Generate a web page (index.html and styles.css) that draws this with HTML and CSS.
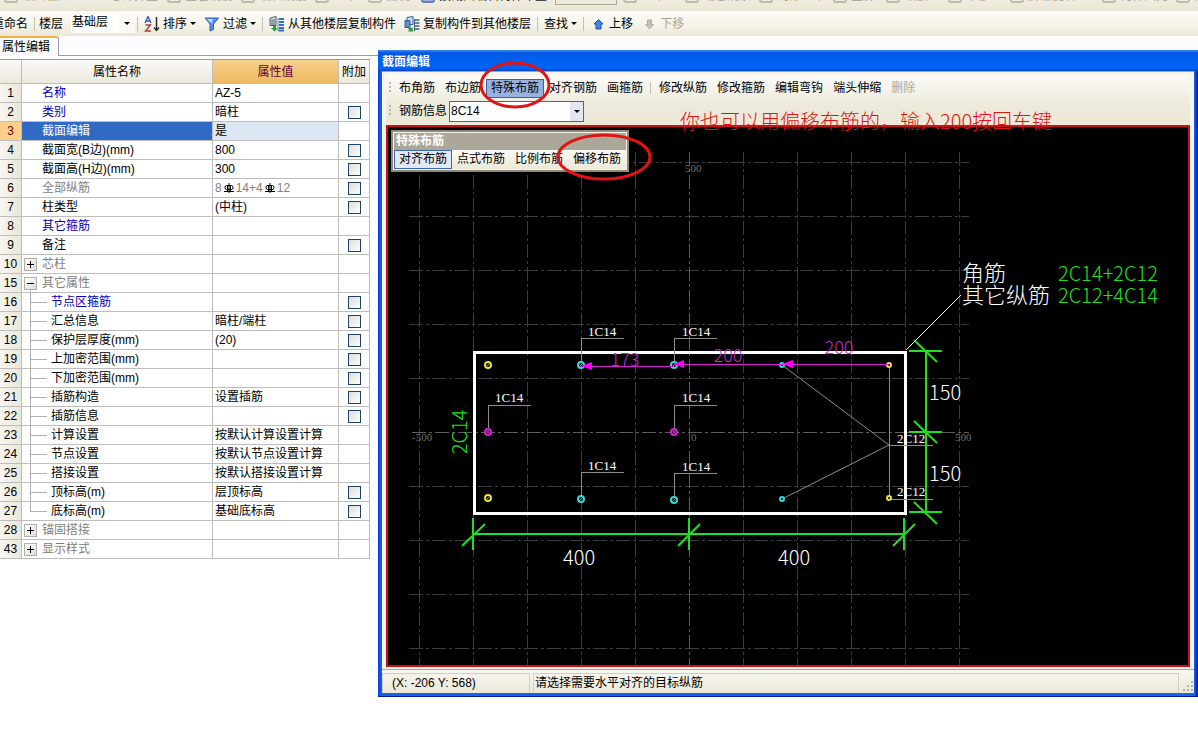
FILE: index.html
```html
<!DOCTYPE html>
<html lang="zh-CN">
<head>
    <meta charset="UTF-8">
    <title>截面编辑</title>
    <link rel="stylesheet" href="styles.css">
</head>
<body>
    <div class="topbar">
        <span class="t1"><i class="blob"></i>绘图输入</span>
        <span class="t2">汇总计算量</span>
        <span class="t3"><i class="blob"></i>查看钢筋</span>
        <span class="t3"><i class="blob"></i>编辑钢筋</span>
        <span class="t4"><i class="blob"></i>二维</span>
        <span class="t4"><i class="blob"></i>俯视</span>
        <span class="t5"><i class="blob blue"></i>按截面编辑构件布置</span>
        <span class="t6"></span>
        <span class="t7"><i class="blob"></i>三维</span>
        <span class="t3"><i class="blob"></i>动态观察</span>
        <span class="t3"><i class="blob"></i>局部三维</span>
        <span class="t4"><i class="blob"></i>全屏</span>
        <span class="t7"><i class="blob"></i>缩放</span>
        <span class="t7"><i class="blob"></i>平移</span>
        <span class="t8"><i class="blob"></i>屏幕旋转</span>
        <span class="t3"><i class="blob"></i>构件图元</span>
        <span class="t3"><i class="blob"></i>选择</span>
    </div>

    <div class="toolbar">
        <button class="btn">重命名</button>
        <span class="sep"></span>
        <label class="floor-label" for="floor">楼层</label>
        <span class="floor-select">
            <select id="floor"><option>基础层</option></select>
        </span>
        <span class="sep"></span>
        <button class="btn">
            <svg width="16" height="16" viewBox="0 0 16 16" fill="none">
                <path d="M1 7L4 0.5L7 7M2.2 5H5.8" stroke="#3b5fb0" stroke-width="1.4"/>
                <path d="M1.5 9H6.5L1.5 15H7" stroke="#a8432f" stroke-width="1.4"/>
                <path d="M12.500 1V14M10 11.500L12.500 14.500L15 11.500" stroke="#222" stroke-width="1.400"/>
            </svg>
            排序<i class="caret"></i>
        </button>
        <button class="btn">
            <svg width="16" height="16" viewBox="0 0 16 16">
                <path d="M1 2H14.500L9.500 8V13.500L6 15V8Z" fill="#5b93e4" stroke="#2c5fb8"/>
                <path d="M3 3H9L7.500 7.500Z" fill="#b8d6fa"/>
            </svg>
            过滤<i class="caret"></i>
        </button>
        <span class="sep"></span>
        <button class="btn">
            <svg width="16" height="16" viewBox="0 0 16 16">
                <path d="M1 2L7 0.500V9.500H1Z" fill="#dfe6ee" stroke="#4b586b"/>
                <path d="M2 4H6M2 6H6M2 8H6" stroke="#4b586b"/>
                <path d="M10 3H15M10 6H15M10 9H15M10 12H15M9.500 14.500H15" stroke="#2f6fc4" stroke-width="2"/>
                <path d="M9 2V15" stroke="#6f8fb8"/>
                <path d="M4 10V12H2L5.500 15.500L9 12H7V10Z" fill="#2f9c4a"/>
            </svg>
            从其他楼层复制构件
        </button>
        <button class="btn">
            <svg width="16" height="16" viewBox="0 0 16 16">
                <path d="M3 1.500L9 0.500V8.500H3Z" fill="#cfe0f5" stroke="#2c5f9e"/>
                <path d="M1 4.500H6V11.500H1Z" fill="#5d8fd0" stroke="#2c5f9e"/>
                <path d="M11 4H15.500M11 7H15.500M11 10H15.500M11 13H15.500" stroke="#4c6078" stroke-width="1.500"/>
                <path d="M10.500 3V15" stroke="#4c6078"/>
                <path d="M3 10L8 12V10.500L9.500 15.500H4L5 14Z" fill="#2f9c4a"/>
            </svg>
            复制构件到其他楼层
        </button>
        <span class="sep"></span>
        <button class="btn">查找<i class="caret"></i></button>
        <span class="sep"></span>
        <button class="btn">
            <svg width="16" height="16" viewBox="0 0 16 16">
                <path d="M8.500 3.500L13 8H11V13H6V8H4Z" fill="#3f86ea" stroke="#1d4fae"/>
            </svg>
            上移
        </button>
        <button class="btn" disabled>
            <svg width="16" height="16" viewBox="0 0 16 16">
                <path d="M8.500 13L12.500 8.500H10.500V4H6.500V8.500H4.500Z" fill="#c4c2b8" stroke="#aeaca2"/>
            </svg>
            下移
        </button>
    </div>

    <div class="workspace">
        <div class="panel">
            <div class="tabs"><button class="tab">属性编辑</button></div>
            <table class="props">
                <colgroup><col class="c-num"><col class="c-name"><col class="c-value"><col class="c-check"></colgroup>
                <thead>
                    <tr><th></th><th>属性名称</th><th class="active">属性值</th><th>附加</th></tr>
                </thead>
                <tbody>
                    <tr><th>1</th><td class="blue">名称</td><td>AZ-5</td><td></td></tr>
                    <tr><th>2</th><td class="blue">类别</td><td>暗柱</td><td><input type="checkbox" aria-label="类别附加"></td></tr>
                    <tr class="selected"><th>3</th><td>截面编辑</td><td>是</td><td></td></tr>
                    <tr><th>4</th><td>截面宽(B边)(mm)</td><td>800</td><td><input type="checkbox" aria-label="截面宽附加"></td></tr>
                    <tr><th>5</th><td>截面高(H边)(mm)</td><td>300</td><td><input type="checkbox" aria-label="截面高附加"></td></tr>
                    <tr><th>6</th><td class="gray">全部纵筋</td><td class="gray">8<svg class="rebar" width="10" height="10" viewBox="0 0 10 10"><path d="M5 0V10M0 8.500H10M2.500 2.500H7.500Q9 2.500 9 4.500T7.500 6.500H2.500Q1 6.500 1 4.500T2.500 2.500M3.500 2.500V8.500M6.500 2.500V8.500" fill="none" stroke="#000"/></svg>14+4<svg class="rebar" width="10" height="10" viewBox="0 0 10 10"><path d="M5 0V10M0 8.500H10M2.500 2.500H7.500Q9 2.500 9 4.500T7.500 6.500H2.500Q1 6.500 1 4.500T2.500 2.500M3.500 2.500V8.500M6.500 2.500V8.500" fill="none" stroke="#000"/></svg>12</td><td><input type="checkbox" aria-label="全部纵筋附加"></td></tr>
                    <tr><th>7</th><td>柱类型</td><td>(中柱)</td><td><input type="checkbox" aria-label="柱类型附加"></td></tr>
                    <tr><th>8</th><td class="blue">其它箍筋</td><td></td><td></td></tr>
                    <tr><th>9</th><td>备注</td><td></td><td><input type="checkbox" aria-label="备注附加"></td></tr>
                    <tr class="group"><th>10</th><td><button class="expander" aria-label="展开芯柱"></button>芯柱</td><td></td><td></td></tr>
                    <tr class="group open"><th>15</th><td><button class="expander" aria-label="收起其它属性"></button>其它属性</td><td></td><td></td></tr>
                    <tr class="child"><th>16</th><td class="blue">节点区箍筋</td><td></td><td><input type="checkbox" aria-label="节点区箍筋附加"></td></tr>
                    <tr class="child"><th>17</th><td>汇总信息</td><td>暗柱/端柱</td><td><input type="checkbox" aria-label="汇总信息附加"></td></tr>
                    <tr class="child"><th>18</th><td>保护层厚度(mm)</td><td>(20)</td><td><input type="checkbox" aria-label="保护层厚度附加"></td></tr>
                    <tr class="child"><th>19</th><td>上加密范围(mm)</td><td></td><td><input type="checkbox" aria-label="上加密范围附加"></td></tr>
                    <tr class="child"><th>20</th><td>下加密范围(mm)</td><td></td><td><input type="checkbox" aria-label="下加密范围附加"></td></tr>
                    <tr class="child"><th>21</th><td>插筋构造</td><td>设置插筋</td><td><input type="checkbox" aria-label="插筋构造附加"></td></tr>
                    <tr class="child"><th>22</th><td>插筋信息</td><td></td><td><input type="checkbox" aria-label="插筋信息附加"></td></tr>
                    <tr class="child"><th>23</th><td>计算设置</td><td>按默认计算设置计算</td><td></td></tr>
                    <tr class="child"><th>24</th><td>节点设置</td><td>按默认节点设置计算</td><td></td></tr>
                    <tr class="child"><th>25</th><td>搭接设置</td><td>按默认搭接设置计算</td><td></td></tr>
                    <tr class="child"><th>26</th><td>顶标高(m)</td><td>层顶标高</td><td><input type="checkbox" aria-label="顶标高附加"></td></tr>
                    <tr class="child last"><th>27</th><td>底标高(m)</td><td>基础底标高</td><td><input type="checkbox" aria-label="底标高附加"></td></tr>
                    <tr class="group"><th>28</th><td><button class="expander" aria-label="展开锚固搭接"></button>锚固搭接</td><td></td><td></td></tr>
                    <tr class="group"><th>43</th><td><button class="expander" aria-label="展开显示样式"></button>显示样式</td><td></td><td></td></tr>
                </tbody>
            </table>
        </div>

        <div class="dialog">
            <div class="title">截面编辑</div>
            <div class="body">
                <div class="tools">
                    <div class="tool-row">
                        <i class="grip"></i>
                        <button class="tool">布角筋</button>
                        <button class="tool">布边筋</button>
                        <button class="tool pressed">特殊布筋</button>
                        <button class="tool">对齐钢筋</button>
                        <button class="tool">画箍筋</button>
                        <span class="tool-sep"></span>
                        <button class="tool">修改纵筋</button>
                        <button class="tool">修改箍筋</button>
                        <button class="tool">编辑弯钩</button>
                        <button class="tool">端头伸缩</button>
                        <button class="tool" disabled>删除</button>
                    </div>
                    <div class="tool-row">
                        <i class="grip"></i>
                        <label class="info-label" for="info">钢筋信息</label>
                        <span class="combo"><select id="info"><option>8C14</option></select></span>
                    </div>
                </div>

                <div class="canvas">
                    <svg class="drawing" width="100%" height="538">
                        <g transform="translate(301 305)">
                            <!-- grid -->
                            <path class="grid" d="M-280 -270H280M-280 -216H280M-280 -162H280M-280 -108H280M-280 -54H280M-280 54H280M-280 108H280M-280 162H280M-280 216H280"/>
                            <path class="grid" d="M-270 -280V280M-216 -280V280M-162 -280V280M-108 -280V280M-54 -280V280M54 -280V280M108 -280V280M162 -280V280M216 -280V280M270 -280V280"/>
                            <path class="grid axis" d="M-277 0H280M0 -280V280"/>
                            <g class="scale">
                                <text x="-4" y="-260">500</text>
                                <text x="-277" y="9">-500</text>
                                <text x="2" y="9">0</text>
                                <text x="266" y="9">500</text>
                            </g>

                            <!-- column outline -->
                            <rect class="outline" x="-215" y="-80" width="431" height="161"/>

                            <!-- dimensions -->
                            <path class="dim" d="M-216 102H215M-216 86V118M0 86V118M215 86V118M237 -81V80M220 -81H253M220 0H253M220 80H253"/>
                            <path class="dim slash" d="M-227 114L-204 92M-11 114L11 92M204 114L226 92M225 -92L248 -70M225 -11L248 11M225 70L248 92"/>
                            <g class="big">
                                <text x="-126" y="133">400</text>
                                <text x="89" y="133">400</text>
                                <text x="240" y="-32">150</text>
                                <text x="240" y="49">150</text>
                                <text class="note" x="273" y="-151">角筋</text>
                                <text class="note" x="273" y="-129">其它纵筋</text>
                                <text class="green" x="369" y="-151">2C14+2C12</text>
                                <text class="green" x="369" y="-129">2C12+4C14</text>
                                <text class="green" text-anchor="middle" transform="translate(-222 0) rotate(-90)">2C14</text>
                            </g>
                            <path class="pointer" d="M217 -82L272 -137"/>

                            <!-- leaders -->
                            <path class="leader" d="M-108 -67V-94H-65M-15 -67V-94H28M-201 0V-27H-158M-15 0V-27H28M-108 67V40H-65M-15 68V41H28M200 -67V67H244M200 13H244"/>
                            <path class="leader fan" d="M93 -67L200 13L93 67"/>
                            <g class="bar-label">
                                <text x="-101" y="-96">1C14</text>
                                <text x="-7" y="-96">1C14</text>
                                <text x="-194" y="-30">1C14</text>
                                <text x="-7" y="-30">1C14</text>
                                <text x="-101" y="38">1C14</text>
                                <text x="-7" y="39">1C14</text>
                                <text x="208" y="11">2C12</text>
                                <text x="208" y="64">2C12</text>
                            </g>

                            <!-- bars -->
                            <g class="bars yellow">
                                <circle cx="-201" cy="-67" r="3"/><circle cx="-201" cy="66" r="3"/>
                                <circle cx="200" cy="-67" r="2"/><circle cx="200" cy="66" r="2"/>
                            </g>
                            <g class="bars cyan">
                                <circle cx="-108" cy="-67" r="3"/><circle cx="-15" cy="-67" r="3"/><circle cx="93" cy="-67" r="2"/>
                                <circle cx="-108" cy="67" r="3"/><circle cx="-15" cy="68" r="3"/><circle cx="93" cy="67" r="2"/>
                            </g>
                            <g class="bars purple">
                                <circle cx="-201" cy="0" r="3"/><circle cx="-15" cy="0" r="3"/>
                            </g>
                            <!-- hatch inside the 14 mm bars -->
                            <path class="hatch" d="M-203 -65L-199 -69M-203 68L-199 64M-110 -65L-106 -69M-17 -65L-13 -69M-110 69L-106 65M-17 70L-13 66"/>
                            <path class="hatch purple" d="M-203 2L-199 -2M-203 -2L-199 2M-17 2L-13 -2M-17 -2L-13 2"/>

                            <!-- offsets -->
                            <path class="offset" d="M-108 -66H-15M-15 -68H200"/>
                            <path class="arrow" d="M-108 -66L-97 -70V-62ZM-15 -68L-5 -72V-64ZM93 -68L104 -72V-64Z"/>
                            <g class="offset-label">
                                <text x="-64" y="-66">173</text>
                                <text x="39" y="-70">200</text>
                                <text x="150" y="-78">200</text>
                            </g>
                        </g>
                    </svg>

                    <div class="popup">
                        <div class="popup-title">特殊布筋</div>
                        <div class="popup-row">
                            <button class="tool current">对齐布筋</button>
                            <button class="tool">点式布筋</button>
                            <button class="tool">比例布筋</button>
                            <button class="tool">偏移布筋</button>
                        </div>
                    </div>
                </div>
            </div>
            <div class="status">
                <span class="pane coords">(X: -206 Y: 568)</span>
                <span class="pane hint">请选择需要水平对齐的目标纵筋</span>
                <svg class="resize" width="12" height="12" viewBox="0 0 12 12">
                    <path d="M9 1H11V3H9ZM5 5H7V7H5ZM9 5H11V7H9ZM1 9H3V11H1ZM5 9H7V11H5ZM9 9H11V11H9Z" fill="#b8b4a2"/>
                </svg>
            </div>

            <svg class="marks" width="100%" height="100%">
                <ellipse cx="137" cy="35" rx="34" ry="22"/>
                <ellipse cx="226" cy="107" rx="46" ry="22"/>
                <text x="302" y="79">你也可以用偏移布筋的，输入200按回车键</text>
            </svg>
        </div>
    </div>
</body>
</html>
```
FILE: styles.css
```css
* {
    box-sizing: border-box;
}
body {
    margin: 0;
    overflow: hidden;
    background: #fff;
    color: #000;
    font-family: "Liberation Sans", "Noto Sans CJK SC", sans-serif;
    font-size: 12px;
    line-height: 18px;
}
button, select {
    font: inherit;
    color: inherit;
    margin: 0;
    border: 0;
    background: none;
    white-space: nowrap;
}
select {
    appearance: none;
    width: 100%;
    outline: none;
}

/* lower edge of the main toolbar */
.topbar {
    display: flex;
    align-items: flex-end;
    height: 11px;
    padding-bottom: 5px;
    padding-left: 4px;
    overflow: hidden;
    background: linear-gradient(#f0ede0, #ebe7d7);
    border-bottom: 1px solid #e4e0cf;
    color: #a5a294;
    white-space: nowrap;
}
.topbar span {
    display: flex;
    align-items: center;
    flex: none;
    height: 18px;
}
.blob {
    width: 14px;
    height: 14px;
    margin-right: 4px;
    border: 2px solid #bdbaae;
    border-radius: 3px;
}
.blob.blue {
    border-color: #6a80b4;
    background: #9db0d8;
}
.topbar .t1 { width: 94px; }
.topbar .t2 { width: 69px; }
.topbar .t3 { width: 74px; }
.topbar .t4 { width: 53px; }
.topbar .t5 { width: 134px; color: #222; }
.topbar .t6 { width: 62px; margin-right: 6px; border: 1px solid #aca899; }
.topbar .t7 { width: 62px; }
.topbar .t8 { width: 92px; }

.toolbar {
    display: flex;
    align-items: center;
    height: 25px;
    margin-left: -12px;
    background: linear-gradient(#fdfcf9, #f5f2e8 60%, #ebe7d7);
    white-space: nowrap;
}
.btn {
    display: flex;
    align-items: center;
    flex: none;
    gap: 3px;
    height: 22px;
    padding: 0 4px;
}
.btn:disabled, .tool:disabled {
    color: #aca899;
}
.caret {
    border: 3px solid transparent;
    border-top-color: #000;
    border-bottom: 0;
}
.sep {
    flex: none;
    width: 1px;
    height: 14px;
    margin: 0 2px;
    background: #c5c2b2;
}
.floor-label {
    margin: 0 8px 0 2px;
}
.floor-select {
    display: flex;
    align-items: center;
    flex: none;
    width: 64px;
    height: 19px;
    padding-right: 5px;
    background: linear-gradient(to right, #fff 48px, #faf9f4 48px);
}
.floor-select select {
    padding: 0 0 3px 1px;
}
.floor-select::after, .combo::after {
    content: "";
    border: 3px solid transparent;
    border-top-color: #000;
    border-bottom: 0;
}

.workspace {
    display: flex;
    align-items: flex-start;
    background: linear-gradient(#fcfcfe 14px, #fff 14px);
}

/* properties */
.panel {
    flex: none;
    width: 378px;
}
.tabs {
    display: flex;
    height: 20px;
    border-bottom: 1px solid #8a9fb4;
}
.tab {
    height: 20px;
    padding: 0 8px 0 2px;
    border-top: 2px solid #f3ad45;
    border-right: 1px solid #8a9fb4;
    border-radius: 0 3px 0 0;
    background: #fcfcfe;
}
.props {
    width: 370px;
    margin-top: 3px;
    border-top: 1px solid #8a9fb4;
    border-collapse: separate;
    border-spacing: 0;
    table-layout: fixed;
}
.c-num { width: 22px; }
.c-name { width: 191px; }
.c-value { width: 126px; }
.c-check { width: 31px; }
.props th, .props td {
    height: 19px;
    padding: 0 0 0 2px;
    border-right: 1px solid #bdbdbd;
    border-bottom: 1px solid #bdbdbd;
    font-weight: normal;
    line-height: 18px;
    text-align: left;
    white-space: nowrap;
}
.props th {
    padding: 0;
    background: linear-gradient(to right, #f7f6f1, #eae7d9);
    text-align: center;
}
.props thead th {
    height: 24px;
    background: linear-gradient(#fbfaf7, #ebe8dc);
}
.props thead th.active {
    background: linear-gradient(#f7d08c, #eeb95f);
    color: #660033;
}
.props td:nth-child(2) {
    padding-left: 20px;
}
.props td:last-child {
    padding: 0;
    text-align: center;
}
.props .blue { color: #0000c0; }
.props .gray { color: #808080; }
.props .selected th {
    background: #fcd08a;
    color: #800000;
}
.props .selected td:nth-child(2) {
    background: #316ac5;
    color: #fff;
}
.props .selected td:nth-child(3) {
    background: #dde7f3;
}
.props .group td {
    color: #808080;
}
.props .group td:nth-child(2) {
    padding-left: 2px;
}
.props .open td:nth-child(2) {
    background: linear-gradient(#b0b0b0, #b0b0b0) 8px 100% / 1px 4px no-repeat;
}
.props .child td:nth-child(2) {
    padding-left: 29px;
    background:
        linear-gradient(#b0b0b0, #b0b0b0) 8px 0 / 1px 100% no-repeat,
        linear-gradient(#b0b0b0, #b0b0b0) 8px 9px / 17px 1px no-repeat;
}
.props .last td:nth-child(2) {
    background-size: 1px 9px, 17px 1px;
}
.props input {
    appearance: none;
    display: block;
    width: 13px;
    height: 13px;
    margin: 0 auto;
    border: 1px solid #1d4467;
    background: linear-gradient(135deg, #dcdcd7, #fff);
}
.expander {
    width: 13px;
    height: 13px;
    margin-right: 5px;
    padding: 0;
    border: 1px solid #b0b0b0;
    background:
        linear-gradient(#000, #000) center / 7px 1px no-repeat,
        linear-gradient(#000, #000) center / 1px 7px no-repeat,
        linear-gradient(135deg, #fff, #dcdcdc);
    vertical-align: middle;
}
.open .expander {
    background:
        linear-gradient(#000, #000) center / 7px 1px no-repeat,
        linear-gradient(135deg, #fff, #dcdcdc);
}
.rebar {
    margin: 0 2px;
    vertical-align: -1px;
}

/* section editor window */
.dialog {
    position: relative;
    flex: 1;
    min-width: 0;
    margin-top: 14px;
    padding: 0 4px 3px;
    background: linear-gradient(to right, #0a3fd8, #1665ee 4px, #1665ee calc(100% - 4px), #0018a0);
    border-bottom: 1px solid #001a94;
}
.title {
    height: 21px;
    margin: 0 -4px;
    padding: 2px 4px 0;
    background: linear-gradient(#3c8cf0, #0058e6 3px, #0061f0 12px, #0064fa 18px, #0046c8);
    color: #fff;
    font-weight: bold;
    line-height: 20px;
}
.body {
    padding: 3px 4px 2px;
    background: #f6f4ec;
    border-top: 1px solid #a8a594;
    border-bottom: 1px solid #aca899;
}
.tools {
    display: flex;
    flex-direction: column;
    gap: 3px;
    height: 50px;
    padding: 3px 0 0;
    background: linear-gradient(#fbfaf7, #ece9d8 70%);
}
.tool-row {
    display: flex;
    align-items: center;
    height: 20px;
    white-space: nowrap;
}
.grip {
    width: 2px;
    height: 12px;
    margin: 0 3px;
    background: repeating-linear-gradient(#bab6a4 0 2px, transparent 2px 4px);
}
.tool {
    flex: none;
    height: 19px;
    padding: 0 4px;
    border: 1px solid transparent;
    line-height: 17px;
}
.tool.pressed {
    background: #98b2e0;
    border-color: #3c5f9f;
}
.tool.current {
    background: #e1e8f6;
    border-color: #3f66b0;
}
.tool-sep {
    width: 1px;
    height: 12px;
    margin: 0 3px 0 2px;
    background: #c5c2b2;
}
.info-label {
    margin: 0 2px 0 5px;
}
.combo {
    display: flex;
    align-items: center;
    width: 135px;
    height: 21px;
    padding-right: 3px;
    border: 1px solid #3f66a8;
    background: linear-gradient(to right, #fff calc(100% - 13px), #e4e8ee calc(100% - 13px));
}
.combo select {
    height: 19px;
    padding: 0 0 2px 1px;
}

.canvas {
    position: relative;
    border: 2px solid #d01010;
    background: #000;
    overflow: hidden;
}
.drawing {
    display: block;
    font-family: "Liberation Serif", "Noto Sans CJK SC", serif;
}
.drawing path, .drawing rect {
    fill: none;
    shape-rendering: crispEdges;
}
.drawing .grid {
    stroke: #3c3c3c;
    stroke-dasharray: 14 3 3 3;
}
.drawing .axis { stroke: #5c5c5c; }
.scale {
    fill: #6e6e6e;
    font-size: 11px;
}
.drawing .outline {
    stroke: #fff;
    stroke-width: 3px;
}
.drawing .dim {
    stroke: #1fe01f;
    stroke-width: 2px;
}
.drawing .slash, .drawing .fan, .drawing .pointer {
    shape-rendering: auto;
}
.big, .offset-label, .marks text {
    font-family: "Noto Sans CJK SC", sans-serif;
    font-size: 20px;
    font-weight: 300;
}
.big {
    fill: #fff;
}
.big .note { font-size: 22px; }
.big .green { fill: #1fe01f; }
.drawing .pointer { stroke: #fff; }
.drawing .leader { stroke: #8c8c8c; }
.bar-label {
    fill: #fff;
    font-size: 13px;
}
.bars {
    fill: #000;
    stroke-width: 2px;
}
.yellow { stroke: #e8e040; }
.cyan { stroke: #30d8d8; }
.purple { stroke: #d020d0; }
.drawing .hatch {
    stroke: #9c9c50;
    shape-rendering: auto;
}
.drawing .hatch.purple { stroke: #d020d0; }
.drawing .offset { stroke: #d81cd8; }
.drawing .arrow {
    fill: #ff00ff;
    shape-rendering: auto;
}
.offset-label {
    fill: #c828c8;
    font-size: 18px;
    text-anchor: middle;
}

.popup {
    position: absolute;
    top: 3px;
    left: 3px;
    padding: 1px;
    border: 2px solid #8f8b78;
    background: #f5f3ea;
}
.popup-title {
    height: 17px;
    padding-left: 2px;
    background: #aca899;
    color: #fff;
    font-weight: bold;
    line-height: 17px;
}
.popup-row {
    display: flex;
    background: linear-gradient(#fbfaf7, #ece9d8);
}

.status {
    display: flex;
    align-items: flex-end;
    gap: 3px;
    height: 23px;
    padding-top: 3px;
    background: linear-gradient(#f8f7f2, #ece9d8);
}
.pane {
    height: 20px;
    border: 1px solid #d2cebc;
    border-bottom: 0;
    line-height: 18px;
}
.coords {
    width: 148px;
    padding-left: 9px;
}
.hint {
    flex: 1;
    padding-left: 1px;
}
.resize {
    flex: none;
    margin-bottom: 1px;
}

/* hand-drawn notes over the window */
.marks {
    position: absolute;
    top: 0;
    left: 0;
    pointer-events: none;
}
.marks ellipse {
    fill: none;
    stroke: #e01414;
    stroke-width: 3px;
}
.marks text {
    fill: #e01414;
}
```
